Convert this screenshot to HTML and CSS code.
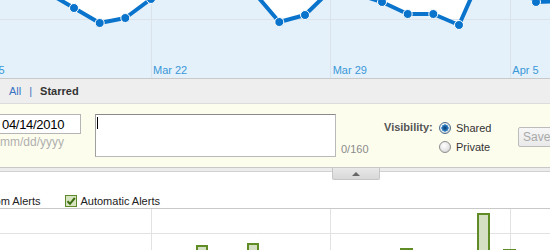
FILE: index.html
```html
<!DOCTYPE html>
<html>
<head>
<meta charset="utf-8">
<title>Annotations</title>
<link rel="stylesheet" href="styles.css">
</head>
<body>
<div class="page">
  <div class="trend">
    <svg class="trend-svg" width="550" height="78" viewBox="0 0 550 78">
      <polygon class="trend-area" points="-3,-20 22.6,-20 48.3,-7 74,8 99.7,23 125.3,18 151,-1 176.7,-20 202.3,-25 228,-20 253.7,-8 279.3,22 305,15 330.7,-10 356.3,-6 382,2 407.7,14 433.3,14 459,25 484.7,-33 510.3,-20 536,2 561.7,1 561.7,78 -3,78"/>
      <line class="trend-grid" x1="0" y1="19.5" x2="550" y2="19.5"/>
      <line class="trend-grid" x1="151.5" y1="0" x2="151.5" y2="78"/>
      <line class="trend-grid" x1="330.5" y1="0" x2="330.5" y2="78"/>
      <line class="trend-grid" x1="510.5" y1="0" x2="510.5" y2="78"/>
      <polyline class="trend-line" points="-3,-20 22.6,-20 48.3,-7 74,8 99.7,23 125.3,18 151,-1 176.7,-20 202.3,-25 228,-20 253.7,-8 279.3,22 305,15 330.7,-10 356.3,-6 382,2 407.7,14 433.3,14 459,25 484.7,-33 510.3,-20 536,2 561.7,1"/>
      <g class="trend-dots">
        <circle cx="48.3" cy="-7" r="4.5"/>
        <circle cx="74" cy="8" r="4.5"/>
        <circle cx="99.7" cy="23" r="4.5"/>
        <circle cx="125.3" cy="18" r="4.5"/>
        <circle cx="151" cy="-1" r="4.5"/>
        <circle cx="253.7" cy="-8" r="4.5"/>
        <circle cx="279.3" cy="22" r="4.5"/>
        <circle cx="305" cy="15" r="4.5"/>
        <circle cx="330.7" cy="-10" r="4.5"/>
        <circle cx="356.3" cy="-6" r="4.5"/>
        <circle cx="382" cy="2" r="4.5"/>
        <circle cx="407.7" cy="14" r="4.5"/>
        <circle cx="433.3" cy="14" r="4.5"/>
        <circle cx="459" cy="25" r="4.5"/>
        <circle cx="536" cy="2" r="4.5"/>
      </g>
      <text class="trend-label" x="-29.5" y="73.5">Mar 15</text>
      <text class="trend-label" x="153" y="73.5">Mar 22</text>
      <text class="trend-label" x="332.7" y="73.5">Mar 29</text>
      <text class="trend-label" x="512.3" y="73.5">Apr 5</text>
    </svg>
  </div>

  <div class="tabs">
    <a class="tab-link" href="#">All</a>
    <span class="tab-sep">|</span>
    <span class="tab-active">Starred</span>
  </div>

  <div class="annot">
    <div class="date-col">
      <input class="date-input" type="text" value="04/14/2010">
      <div class="date-hint">mm/dd/yyyy</div>
    </div>
    <div class="note-box"><span class="caret"></span></div>
    <div class="count">0/160</div>
    <div class="vis-label">Visibility:</div>
    <div class="vis-options">
      <label class="vis-row"><span class="radio radio-on"></span>Shared</label>
      <label class="vis-row"><span class="radio"></span>Private</label>
    </div>
    <button class="save" type="button">Save</button>
  </div>
  <div class="divider"></div>
  <div class="collapse-tab"><span class="collapse-arrow"></span></div>

  <div class="alerts">
    <span class="alert-item"><span class="check"><svg width="10" height="10" viewBox="0 0 10 10"><path d="M1.5 5.2 L4 7.8 L8.8 2" /></svg></span>Custom Alerts</span>
    <span class="alert-item"><span class="check"><svg width="10" height="10" viewBox="0 0 10 10"><path d="M1.5 5.2 L4 7.8 L8.8 2" /></svg></span>Automatic Alerts</span>
  </div>

  <div class="bars">
    <svg class="bars-svg" width="550" height="60" viewBox="0 0 550 60">
      <line class="bars-grid" x1="0" y1="24.5" x2="550" y2="24.5"/>
      <line class="bars-grid" x1="151.5" y1="0" x2="151.5" y2="60"/>
      <line class="bars-grid" x1="330.5" y1="0" x2="330.5" y2="60"/>
      <line class="bars-grid" x1="510.5" y1="0" x2="510.5" y2="60"/>
      <rect class="bar" x="197" y="37" width="10" height="40"/>
      <rect class="bar" x="248" y="35" width="10" height="40"/>
      <rect class="bar" x="401" y="40" width="11" height="40"/>
      <rect class="bar" x="478" y="5" width="11" height="70"/>
      <rect class="bar" x="504" y="41" width="11" height="40"/>
    </svg>
  </div>
</div>
</body>
</html>
```
FILE: styles.css
```css
html, body {
  margin: 0;
  padding: 0;
  width: 550px;
  height: 250px;
  overflow: hidden;
  background: #ffffff;
  font-family: "Liberation Sans", Arial, sans-serif;
  font-size: 11px;
  color: #222;
}

.page {
  position: relative;
  width: 550px;
  height: 250px;
  overflow: hidden;
}

/* ---------- trend chart ---------- */
.trend {
  height: 78px;
  border-bottom: 1px solid #c9c9c9;
  background: #ffffff;
}
.trend-svg { display: block; }
.trend-area { fill: #e4f1fa; }
.trend-grid { stroke: #dae3ea; stroke-width: 1; }
.trend-line {
  fill: none;
  stroke: #0a74cc;
  stroke-width: 4;
  stroke-linejoin: round;
}
.trend-dots circle {
  fill: #0a74cc;
  stroke: #ffffff;
  stroke-width: 1;
}
.trend-label {
  font-family: "Liberation Sans", Arial, sans-serif;
  font-size: 11px;
  fill: #3a98d8;
}

/* ---------- tabs ---------- */
.tabs {
  height: 24px;
  line-height: 25px;
  background: #eeeeee;
  border-bottom: 1px solid #dcdcdc;
  padding-left: 9px;
  font-size: 11px;
  display: flex;
}
.tab-link { color: #3a74c4; text-decoration: none; }
.tab-sep { color: #3a74c4; margin: 0 8px 0 8px; }
.tab-active { font-weight: bold; color: #333; }

/* ---------- annotation form ---------- */
.annot {
  height: 53px;
  padding-top: 10px;
  background: #fdfdee;
  border-bottom: 1px solid #c8c8c8;
  display: flex;
  align-items: flex-start;
}
.date-col {
  margin-left: -3px;
  width: 84px;
  flex: none;
}
.date-input {
  display: block;
  box-sizing: border-box;
  width: 84px;
  height: 20px;
  margin: 0;
  padding: 0 0 0 4px;
  border: 1px solid #b5b5b5;
  background: #ffffff;
  font-family: "Liberation Sans", Arial, sans-serif;
  font-size: 13px;
  letter-spacing: -0.3px;
  color: #000;
  outline: none;
}
.date-hint {
  margin-top: 1px;
  padding-left: 3px;
  font-size: 12px;
  line-height: 14px;
  color: #b0b0b0;
}
.note-box {
  box-sizing: border-box;
  margin-left: 14px;
  width: 241px;
  height: 43px;
  background: #ffffff;
  border: 1px solid #b9b9b9;
  border-top-color: #8a8a8a;
  border-left-color: #a0a0a0;
  padding: 2px 0 0 1px;
  flex: none;
}
.caret {
  display: block;
  width: 1px;
  height: 12px;
  background: #000;
}
.count {
  margin-left: 5px;
  margin-top: 29px;
  width: 43px;
  line-height: 13px;
  color: #8a8a8a;
  flex: none;
}
.vis-label {
  margin-top: 7px;
  width: 55px;
  line-height: 13px;
  font-weight: bold;
  color: #555;
  flex: none;
}
.vis-options {
  width: 79px;
  margin-top: 4px;
  display: flex;
  flex-direction: column;
  flex: none;
}
.vis-row {
  display: flex;
  align-items: center;
  height: 19px;
  color: #333;
}
.radio {
  box-sizing: border-box;
  width: 12px;
  height: 12px;
  margin-right: 5px;
  border-radius: 50%;
  border: 1px solid #8d8d8d;
  background: radial-gradient(circle at 40% 35%, #ffffff 0%, #e6e6e6 55%, #c8c8c8 100%);
  flex: none;
}
.radio-on {
  border-color: #4b6d8c;
  background:
    radial-gradient(circle at 50% 50%, #0b3a66 0, #1f6fb5 2.5px, #56a0dc 3.5px, transparent 3.8px),
    radial-gradient(circle at 40% 35%, #ffffff 0%, #e2e2e2 60%, #bdbdbd 100%);
}
.save {
  margin: 13px 0 0 0;
  box-sizing: border-box;
  height: 20px;
  width: 45px;
  padding: 0 0 0 4px;
  text-align: left;
  border: 1px solid #bcbcbc;
  border-radius: 2px;
  background: linear-gradient(#f7f7f7, #e9e9e9);
  font-family: "Liberation Sans", Arial, sans-serif;
  font-size: 12px;
  color: #a9a9a9;
  flex: none;
}

.divider {
  height: 3px;
  background: #ececec;
  border-bottom: 1px solid #d2d2d2;
}
.collapse-tab {
  position: absolute;
  left: 332px;
  top: 168px;
  box-sizing: border-box;
  width: 48px;
  height: 12px;
  background: linear-gradient(#e8e8e8, #d8d8d8);
  border: 1px solid #c6c6c6;
  border-top: none;
  border-radius: 0 0 2px 2px;
  display: flex;
  justify-content: center;
  align-items: center;
}
.collapse-arrow {
  width: 0;
  height: 0;
  border-left: 4px solid transparent;
  border-right: 4px solid transparent;
  border-bottom: 4px solid #666;
}

/* ---------- alerts ---------- */
.alerts {
  height: 14px;
  padding-top: 22px;
  margin-left: -43px;
  display: flex;
  align-items: center;
  font-size: 11px;
  line-height: 13px;
  color: #222;
}
.alert-item {
  display: flex;
  align-items: center;
  margin-right: 25px;
}
.check {
  box-sizing: border-box;
  width: 12px;
  height: 12px;
  margin-right: 3px;
  border: 1px solid #5e8a2c;
  background: #d6e4c0;
  display: flex;
  align-items: center;
  justify-content: center;
}
.check svg path {
  fill: none;
  stroke: #3d6d12;
  stroke-width: 2;
}

/* ---------- bar chart ---------- */
.bars {
  border-top: 1px solid #c9c9c9;
}
.bars-svg { display: block; }
.bars-grid { stroke: #e2e2e2; stroke-width: 1; }
.bar {
  fill: #d4dfc3;
  stroke: #5f8c24;
  stroke-width: 2;
}
```
